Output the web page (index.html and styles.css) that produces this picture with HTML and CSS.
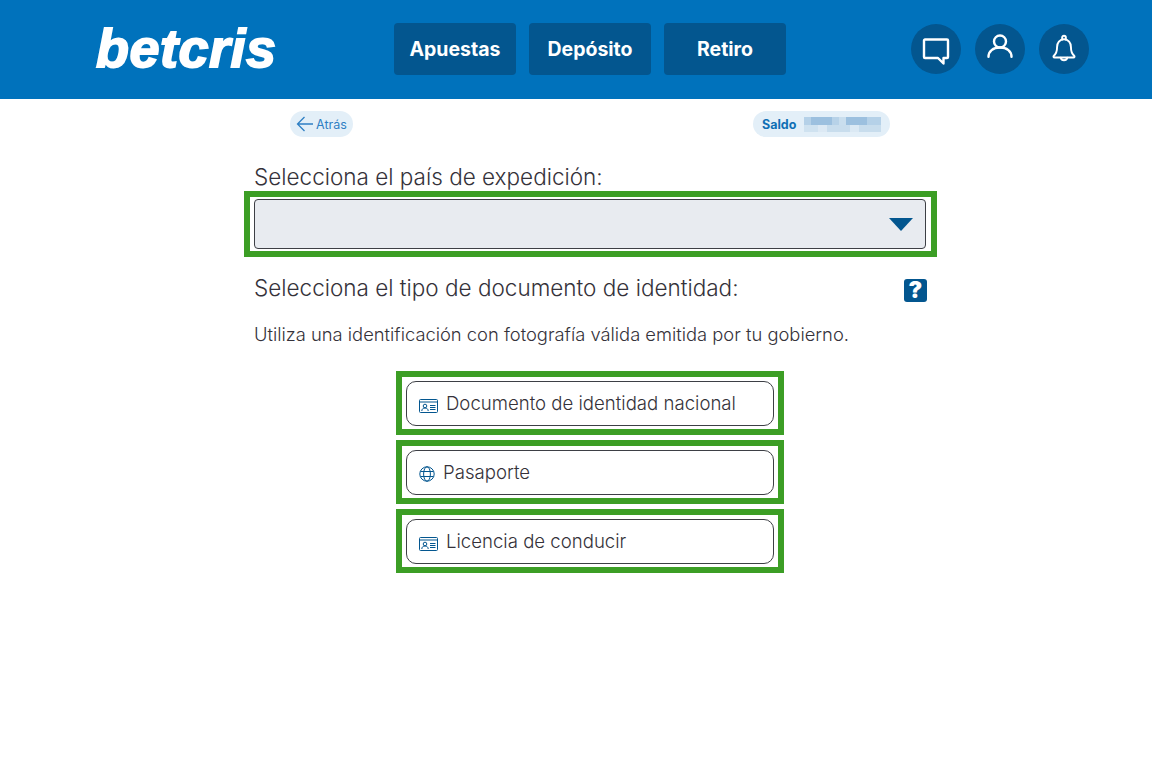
FILE: index.html
```html
<!DOCTYPE html>
<html lang="es">
<head>
<meta charset="utf-8">
<title>Betcris</title>
<link rel="stylesheet" href="styles.css">
</head>
<body>
<header class="top">
  <div class="logo">betcris</div>
  <nav class="nav">
    <a class="nav-btn">Apuestas</a>
    <a class="nav-btn">Depósito</a>
    <a class="nav-btn">Retiro</a>
  </nav>
  <div class="icons">
    <span class="circle"><svg class="i-chat" width="28" height="28" viewBox="0 0 28 28" fill="none" stroke="#fff" stroke-width="2.400" stroke-linejoin="round" stroke-linecap="round"><path d="M3 2.500h22a1 1 0 0 1 1 1V20a1 1 0 0 1-1 1h-3.500v5.500L16 21H3a1 1 0 0 1-1-1V3.500a1 1 0 0 1 1-1z"/></svg></span>
    <span class="circle"><svg class="i-user" width="28" height="24" viewBox="0 0 28 24" fill="none" stroke="#fff" stroke-width="2.400" stroke-linecap="round"><circle cx="14" cy="7.500" r="6"/><path d="M2.500 22.800c0-5.500 4.500-9.300 11.500-9.300s11.500 3.800 11.500 9.300"/></svg></span>
    <span class="circle"><svg class="i-bell" width="24" height="30" viewBox="0 0 26 32" fill="none" stroke="#fff" stroke-width="2.100" stroke-linejoin="round" stroke-linecap="round"><path d="M13 5.500c-4.800 0-7.500 3.700-7.500 8.200 0 5-1.200 7.500-3.500 9.500-.8.700-.4 2 .8 2h20.400c1.200 0 1.600-1.300.8-2-2.300-2-3.500-4.500-3.500-9.500 0-4.500-2.700-8.200-7.500-8.200z"/><path d="M11 5.700V3.600a2 2 0 0 1 4 0v2.100"/><path d="M9.500 25.500a3.600 3.600 0 0 0 7 0"/></svg></span>
  </div>
</header>

<main class="main">
  <div class="subbar">
    <a class="pill back">
      <svg width="18" height="16" viewBox="0 0 18 16" fill="none" stroke="#2f7fc4" stroke-width="1.300"><path d="M17 8H1.500M8.500 1 1.500 8l7 7"/></svg>
      <span>Atrás</span>
    </a>
    <div class="pill saldo">
      <span class="saldo-label">Saldo</span>
      <span class="blur"></span>
    </div>
  </div>

  <h2 class="title first">Selecciona el país de expedición:</h2>
  <div class="frame">
    <div class="select"><span class="caret"></span></div>
  </div>

  <div class="doc-head">
    <h2 class="title">Selecciona el tipo de documento de identidad:</h2>
    <span class="help">?</span>
  </div>
  <p class="hint">Utiliza una identificación con fotografía válida emitida por tu gobierno.</p>

  <div class="options">
    <div class="frame option-frame">
      <button class="option">
        <svg class="ico" width="19" height="15" viewBox="0 0 19 15" fill="none" stroke="#03568f" stroke-width="1"><rect x=".5" y="1.500" width="18" height="13" rx="1"/><path d="M.5 4h18"/><circle cx="6" cy="8" r="1.800"/><path d="M2.800 13c0-2 1.400-3 3.200-3s3.200 1 3.200 3M11 7.500h5.500M11 9.500h5.500M11 11.500h5.500"/></svg>
        <span class="opt-text">Documento de identidad nacional</span>
      </button>
    </div>
    <div class="frame option-frame">
      <button class="option">
        <svg class="ico globe" width="16" height="16" viewBox="0 0 16 16" fill="none" stroke="#03568f" stroke-width="1"><circle cx="8" cy="8" r="7.200"/><ellipse cx="8" cy="8" rx="3.400" ry="7.200"/><path d="M1.500 5.500h13M1.500 10.500h13"/></svg>
        <span class="opt-text">Pasaporte</span>
      </button>
    </div>
    <div class="frame option-frame">
      <button class="option">
        <svg class="ico" width="19" height="15" viewBox="0 0 19 15" fill="none" stroke="#03568f" stroke-width="1"><rect x=".5" y="1.500" width="18" height="13" rx="1"/><path d="M.5 4h18"/><circle cx="6" cy="8" r="1.800"/><path d="M2.800 13c0-2 1.400-3 3.200-3s3.200 1 3.200 3M11 7.500h5.500M11 9.500h5.500M11 11.500h5.500"/></svg>
        <span class="opt-text">Licencia de conducir</span>
      </button>
    </div>
  </div>
</main>
</body>
</html>
```
FILE: styles.css
```css
* { box-sizing: border-box; }
body { margin: 0; background: #fff; font-family: "Inter", "Liberation Sans", sans-serif; color: #3d3a40; }

.top { height: 99px; background: #0072bc; display: flex; align-items: center; padding: 0 63px 1px 96px; }
.logo { width: 298px; font-family: "Liberation Sans", sans-serif; font-weight: 700; font-style: italic; font-size: 54px; letter-spacing: .5px; color: #fff; line-height: 1; -webkit-text-stroke: 1.800px #fff; padding-bottom: 3px; }
.nav { display: flex; gap: 13px; }
.nav-btn { width: 122px; height: 52px; border-radius: 4px; background: #03568f; color: #fff; display: flex; align-items: center; justify-content: center; font-family: "Inter", sans-serif; font-weight: 700; font-size: 19.500px; }
.icons { margin-left: auto; display: flex; gap: 14px; }
.circle { width: 50px; height: 50px; border-radius: 50%; background: #03568f; display: flex; align-items: center; justify-content: center; }
.i-chat { margin-top: 3px; }
.i-user { margin-bottom: 6px; }

.main { width: 693px; margin-left: 244px; }
.subbar { display: flex; justify-content: space-between; align-items: center; padding: 12px 47px 0 46px; }
.pill { height: 26px; border-radius: 13px; background: #e3eff8; display: flex; align-items: center; }
.back { width: 63px; padding-left: 6px; gap: 2px; color: #2f7fc4; font-size: 12.500px; }
.saldo { width: 137px; padding-left: 9px; gap: 8px; }
.saldo-label { color: #0f6fb5; font-size: 12.500px; font-weight: 700; }
.blur { width: 77px; height: 15px; background:
  linear-gradient(90deg, #b5d1e8 0 9%, #9cc0df 9% 36%, #b7d2e8 36% 45%, #c9deee 45% 54%, #9cc0df 54% 82%, #b5d1e8 82% 100%) top / 100% 8px no-repeat,
  linear-gradient(90deg, #cfe2f0 0 18%, #dce9f4 18% 30%, #c8dded 30% 60%, #dbe9f4 60% 72%, #c8dded 72% 100%) bottom / 100% 7px no-repeat; }

.title { margin: 0; font-size: 22.500px; font-weight: 300; line-height: 26px; color: #35323a; }
.first { margin: 27px 0 1px 10px; }
.frame { border: 6px solid #3c9e25; background: #fff; }
.frame:not(.option-frame) { padding: 2px 5px 2px 4px; height: 66px; }
.select { height: 50px; background: #e8ebf0; border: 1px solid #3d3f45; border-radius: 4px; display: flex; align-items: center; justify-content: flex-end; padding-right: 12px; }
.caret { width: 0; height: 0; border-left: 12px solid transparent; border-right: 12px solid transparent; border-top: 13px solid #03568f; }

.doc-head { display: flex; justify-content: space-between; align-items: flex-start; margin: 18px 10px 0 10px; }
.help { width: 23px; height: 23px; border-radius: 3px; background: #03568f; color: #fff; font-weight: 900; font-size: 23px; line-height: 23px; display: flex; align-items: center; justify-content: center; margin-top: 4px; }
.hint { margin: 19px 0 0 10px; font-size: 18.350px; font-weight: 300; line-height: 26px; color: #35323a; }

.options { display: flex; flex-direction: column; gap: 5px; width: 388px; margin: 24px 0 0 152px; }
.option-frame { height: 64px; padding: 4px 4px 3px 4px; }
.option { width: 100%; height: 45px; background: #fff; border: 1px solid #3d3f45; border-radius: 10px; display: flex; align-items: center; gap: 8px; padding: 0 12px; font-family: inherit; font-size: 18.600px; font-weight: 300; color: #35323a; }
.opt-text { margin-bottom: 1px; }
.ico { flex: none; margin-top: 3px; }
```
